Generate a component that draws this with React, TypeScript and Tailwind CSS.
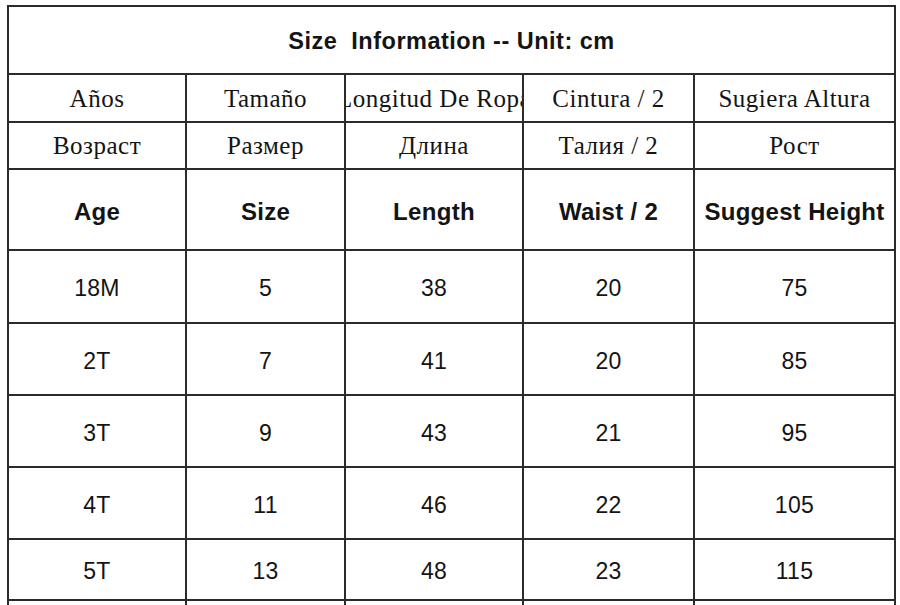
const cols = 'grid-cols-[178px_159px_178px_171px_201px]'

const spanish = ['Años', 'Tamaño', 'Longitud De Ropa', 'Cintura / 2', 'Sugiera Altura']
const russian = ['Возраст', 'Размер', 'Длина', 'Талия / 2', 'Рост']
const english = ['Age', 'Size', 'Length', 'Waist / 2', 'Suggest Height']

const rows: { cells: string[]; h: string }[] = [
  { cells: ['18M', '5', '38', '20', '75'], h: 'h-[73px]' },
  { cells: ['2T', '7', '41', '20', '85'], h: 'h-[72px]' },
  { cells: ['3T', '9', '43', '21', '95'], h: 'h-[72px]' },
  { cells: ['4T', '11', '46', '22', '105'], h: 'h-[72px]' },
  { cells: ['5T', '13', '48', '23', '115'], h: 'h-[61px]' },
]

function Cell({ children, className = '' }: { children?: React.ReactNode; className?: string }) {
  return (
    <div
      className={`flex items-center justify-center overflow-hidden whitespace-nowrap border-r-2 border-b-2 border-[#2b2b2b] ${className}`}
    >
      {children}
    </div>
  )
}

export default function App() {
  return (
    <div className="h-[605px] w-[900px] overflow-hidden bg-white pl-[7px] pt-[5px] text-[#141414]">
      <div className="w-[889px] border-l-2 border-t-2 border-[#2b2b2b]">
        {/* title */}
        <div className="flex h-[68px] items-center justify-center border-r-2 border-b-2 border-[#2b2b2b] pt-[3px] font-['Liberation_Sans',Arial,sans-serif] text-[23.5px] font-bold tracking-[0.5px]">
          Size&nbsp; Information -- Unit: cm
        </div>

        <div className={`grid ${cols} font-['Liberation_Serif','Times_New_Roman',serif] text-[25px] tracking-[0.5px]`}>
          {spanish.map((t) => (
            <Cell key={t} className="h-[48px] pt-[1px]">
              {t}
            </Cell>
          ))}
          {russian.map((t) => (
            <Cell key={t} className="h-[47px] pt-[1px]">
              {t}
            </Cell>
          ))}
        </div>

        <div className={`grid ${cols} font-['Liberation_Sans',Arial,sans-serif] text-[23px]`}>
          {english.map((t) => (
            <Cell key={t} className="h-[81px] pt-[4px] text-[24px] font-bold tracking-[0.3px]">
              {t}
            </Cell>
          ))}
          {rows.map((r) =>
            r.cells.map((c, i) => (
              <Cell key={r.cells[0] + i} className={`${r.h} pt-[4px] tracking-[0.3px]`}>
                {c}
              </Cell>
            )),
          )}
          {[0, 1, 2, 3, 4].map((i) => (
            <Cell key={'blank' + i} className="h-[72px]" />
          ))}
        </div>
      </div>
    </div>
  )
}
